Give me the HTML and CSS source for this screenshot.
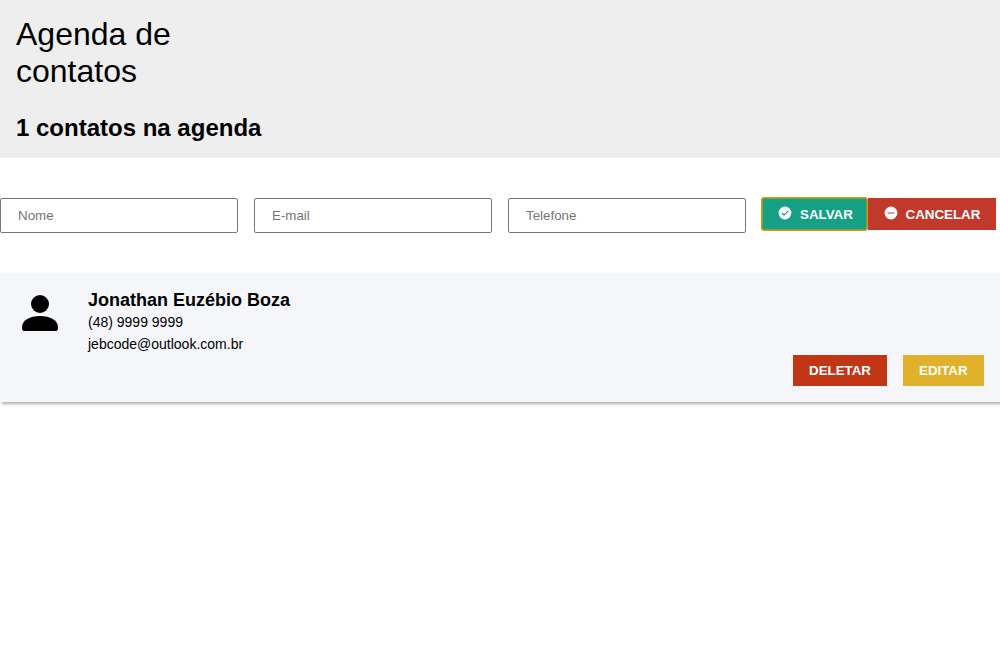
FILE: index.html
```html
<!DOCTYPE html>
<html lang="pt-BR">
<head>
<meta charset="utf-8">
<title>Agenda de contatos</title>
<link rel="stylesheet" href="styles.css">
</head>
<body>
<header class="header">
  <h1 class="title">Agenda de<br>contatos</h1>
  <h2 class="count">1 contatos na agenda</h2>
</header>
<form class="form">
  <input class="field" type="text" placeholder="Nome">
  <input class="field" type="text" placeholder="E-mail">
  <input class="field" type="text" placeholder="Telefone">
  <div class="form-actions">
    <button class="btn btn-save" type="button"><svg class="btn-icon" viewBox="0 0 24 24"><path fill="#fff" fill-rule="evenodd" d="M12 1a11 11 0 1 0 0 22 11 11 0 0 0 0-22zm-1.700 16.200-4.600-4.600 1.500-1.500 3.100 3.100 6.600-6.600 1.500 1.500z"/></svg>SALVAR</button>
    <button class="btn btn-cancel" type="button"><svg class="btn-icon" viewBox="0 0 24 24"><path fill="#fff" fill-rule="evenodd" d="M12 1a11 11 0 1 0 0 22 11 11 0 0 0 0-22zM6 11v2h12v-2z"/></svg>CANCELAR</button>
  </div>
</form>
<article class="card">
  <svg class="avatar" viewBox="0 0 48 48"><circle cx="24" cy="15" r="9"/><path d="M6 38.500C6 31 14 27 24 27S42 31 42 38.500Q42 42 40 42H8Q6 42 6 38.500z"/></svg>
  <div class="info">
    <h3 class="name">Jonathan Euzébio Boza</h3>
    <p class="detail">(48) 9999 9999</p>
    <p class="detail">jebcode@outlook.com.br</p>
  </div>
  <div class="card-actions">
    <button class="btn btn-delete" type="button">DELETAR</button>
    <button class="btn btn-edit" type="button">EDITAR</button>
  </div>
</article>
</body>
</html>
```

FILE: styles.css
```css
* { box-sizing: border-box; margin: 0; padding: 0; }
body { min-height: 100vh; font-family: "Liberation Sans", Arial, sans-serif; color: #000; background: #fff; }
.header { background: #eee; height: 158px; padding: 16px; }
.title { font-size: 32px; font-weight: 400; line-height: 37px; }
.count { font-size: 24px; line-height: 28px; margin-top: 24px; }
.form { display: flex; gap: 16px; margin: 40px 0; height: 35px; }
.field { width: 238px; height: 35px; padding: 0 17px; border: 1px solid #767676; border-radius: 2px; font-family: inherit; font-size: 13.333px; }
.field::placeholder { color: #757575; }
.form-actions { display: flex; align-items: flex-start; }
.btn { display: flex; align-items: center; border: 0; color: #fff; font-family: inherit; font-size: 13.333px; font-weight: 700; white-space: nowrap; }
.form-actions .btn { height: 32px; }
.btn-icon { flex: none; width: 14px; height: 14px; margin: -3px 8px 0 0; }
.form-actions .btn-save { width: 107px; height: 34px; margin: -1px 0 0 -1px; padding-left: 15.500px; background: #16a085; border: 1px solid #e59700; box-shadow: inset 0 0 0 .5px #e59700; border-radius: 3px; }
.btn-save .btn-icon { margin-right: 8.500px; }
.form-actions .btn-cancel { width: 128px; padding-left: 15.500px; background: #c0392b; }
.card { display: flex; height: 129px; padding: 16px; background: #f5f6fa; box-shadow: 2px 2px 3px #aaadaa; }
.avatar { width: 48px; height: 48px; margin-right: 24px; }
.info { flex: 1; }
.name { font-size: 18px; line-height: 22px; }
.detail { font-size: 14px; line-height: 22px; }
.card-actions { display: flex; gap: 16px; align-self: flex-end; }
.card-actions .btn { height: 31px; padding: 0 16px; }
.btn-delete { width: 94px; background: #c23616; }
.btn-edit { width: 81px; background: #e1b12c; }
```
